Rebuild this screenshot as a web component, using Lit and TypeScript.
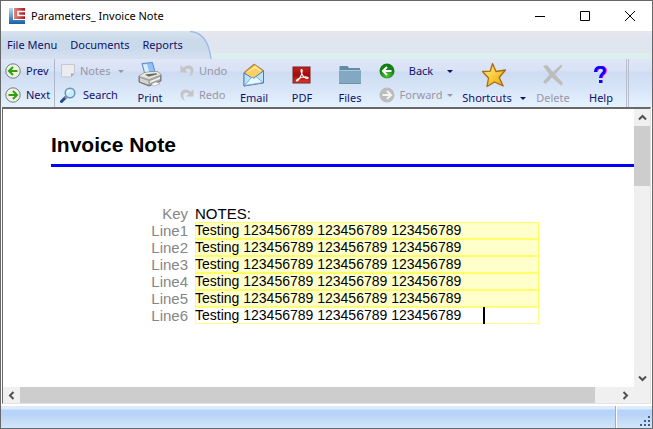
import { LitElement, html, css, svg } from "lit";
import { customElement, state } from "lit/decorators.js";

const arrowLeft = svg`<path d="M12.500 8H4.500M8 4L4 8l4 4" fill="none" stroke-width="2"/>`;
const arrowRight = svg`<path d="M3.500 8h8M8 4l4 4-4 4" fill="none" stroke-width="2"/>`;
const undoPath = "M1 1v8h8L6 6.500C8.500 4 12 5 12 8c0 2-.6 4-2 6 3-1.500 5-4 5-7 0-5.500-6.500-7.500-11-3z";

const icons = {
  prev: html`<svg width="16" height="16" viewBox="0 0 16 16"><circle cx="8" cy="8" r="7.200" fill="#eef1e2" stroke="#77807c"/><g stroke="#2fa012">${arrowLeft}</g></svg>`,
  next: html`<svg width="16" height="16" viewBox="0 0 16 16"><circle cx="8" cy="8" r="7.200" fill="#eef1e2" stroke="#77807c"/><g stroke="#2fa012">${arrowRight}</g></svg>`,
  back: html`<svg width="16" height="16" viewBox="0 0 16 16"><defs><radialGradient id="g" cy="0.8"><stop offset="0" stop-color="#55c336"/><stop offset="1" stop-color="#127f12"/></radialGradient></defs><circle cx="8" cy="8" r="7.500" fill="url(#g)"/><g stroke="#fff">${arrowLeft}</g></svg>`,
  forward: html`<svg width="16" height="16" viewBox="0 0 16 16"><circle cx="8" cy="8" r="7.500" fill="#bcbcbc"/><g stroke="#f4f4f4">${arrowRight}</g></svg>`,
  note: html`<svg width="16" height="16" viewBox="0 0 16 16"><path d="M1.500 1.500h13v9l-3.500 3.500h-9.500z" fill="#ebebf0" stroke="#c8c6cc"/><path d="M11 14v-3.500h3.500z" fill="#aaa8ae"/></svg>`,
  search: html`<svg width="16" height="16" viewBox="0 0 16 16"><path d="M1.500 14.500L6 10" stroke="#24489c" stroke-width="3" stroke-linecap="round"/><path d="M5 11l2-2" stroke="#d39a3a" stroke-width="2"/><circle cx="10" cy="6" r="4.800" fill="#c9eefb" stroke="#6d93bd" stroke-width="1.500"/><path d="M7.500 5.500a3 3 0 0 1 3-2" fill="none" stroke="#fff" stroke-width="1.300"/></svg>`,
  undo: html`<svg width="16" height="14" viewBox="0 0 16 15"><path d="${undoPath}" fill="#c5c5c8"/></svg>`,
  redo: html`<svg width="16" height="14" viewBox="0 0 16 15"><path transform="translate(16 0) scale(-1 1)" d="${undoPath}" fill="#c5c5c8"/></svg>`,
  print: html`<svg width="24" height="25" viewBox="0 0 24 25"><path d="M4 1.500L14.500.5 17.500 12 7 13z" fill="#8fc1f6" stroke="#4d79bd" stroke-width=".8"/><path d="M5 2.500l4-.5 2.500 9.500-4 .5z" fill="#d8edff"/><path d="M1 14l6-3.500 12-1 4 3v6.500l-12 5L1 20z" fill="#a3a4a2" stroke="#595a58" stroke-width=".8"/><path d="M1 14l6-3.500 12-1 4 3-12 4.500z" fill="#e6e6e1"/><path d="M7 12.500l11-1.200 1.500 1-9 2.500z" fill="#686a68"/><path d="M2 16l8.500 3v3.500L2 19.500z" fill="#d5d5d1"/><path d="M12 19l10-4v2l-10 4z" fill="#f0f0ed"/><path d="M13 22l5-2 4 1.500-6 2.500z" fill="#fff" stroke="#888" stroke-width=".5"/></svg>`,
  email: html`<svg width="22" height="24" viewBox="0 0 22 24"><path d="M1 9.500L11 1l9.500 6.500v11L1 23z" fill="#ed9c28" stroke="#98732c" stroke-width=".8"/><path d="M3.500 9L12 2.500 18.500 7.500v7l-15 2z" fill="#fff0a6"/><path d="M4 9.500L12 5l6 3.500v6L4 17z" fill="#f9cf66"/><path d="M1 10l9 5.500L20.500 8v12L1 23z" fill="#b9e5fc" stroke="#527aae"/><path d="M1.500 22.500L9 14l2 1.500 2-2 7 6z" fill="#e9f8ff" stroke="#709cc9" stroke-width=".8"/></svg>`,
  pdf: html`<svg width="20" height="20" viewBox="0 0 20 20"><defs><linearGradient id="p" x2="0" y2="1"><stop stop-color="#c92022"/><stop offset=".5" stop-color="#9f0b0c"/><stop offset="1" stop-color="#e03a2d"/></linearGradient></defs><rect x="1" y="2" width="17" height="16" fill="url(#p)" stroke="#772021"/><path d="M9.300 4.500c1.600-.5 1 3.500-.7 7-1.500 3-3.300 5-4.100 4.400-.8-1.200 3.500-3.400 7.500-3.900 3-.4 4.500.4 4 1.200-1 1-3.500-.3-5.300-2.800C9.200 8 8.500 5 9.300 4.500z" fill="none" stroke="#fff" stroke-width="1.100"/></svg>`,
  folder: html`<svg width="24" height="20" viewBox="0 0 24 20"><path d="M1.500 1h8l1.500 2h11v4h-20.500z" fill="#648ba5"/><path d="M1 5h22v13.500H1z" fill="#82a9c1"/><path d="M1.500 5.500h21" stroke="#a9c7d8"/><path d="M1 18.500h22" stroke="#6b92aa"/></svg>`,
  star: html`<svg width="26" height="26" viewBox="0 0 26 26"><defs><linearGradient id="s" x2="1" y2="1"><stop stop-color="#fff09a"/><stop offset=".5" stop-color="#f9cd3a"/><stop offset="1" stop-color="#e69d10"/></linearGradient></defs><path d="M11.500 1.500l3.500 8 9.500-1.500-6.300 7.500 4 8.500-8.700-4L6 24.500 7.500 16 1.500 9.500l7.700-.3z" fill="url(#s)" stroke="#a86a12" stroke-width="1.300" stroke-linejoin="round"/></svg>`,
  cross: html`<svg width="24" height="22" viewBox="0 0 24 22"><path d="M2 2l4-1 6 7 8-7.500L21.500 2 14 10.500l8 8.500-2 2.500-9-8L4.500 20 2 18l6.500-7.500z" fill="#bdbdbd"/></svg>`,
  help: html`<svg width="14" height="18" viewBox="0 0 14 18"><path d="M2.500 6c0-6 9-6 9-1.500C11.500 8 7.500 7.500 7.500 12" fill="none" stroke="#ff28e6" stroke-width="3"/><path d="M1.500 6c0-6 9-6 9-1.500C10.500 8 6.500 7.500 6.500 12" fill="none" stroke="#1200ff" stroke-width="3"/><path d="M5 14h3.500v3H5z" fill="#1200ff"/></svg>`,
  caret: html`<svg class="caret" width="6" height="3" viewBox="0 0 6 3"><path d="M0 0h6L3 3z" fill="currentColor"/></svg>`,
};

const chevron = (d: string) =>
  html`<svg width="9" height="9" viewBox="0 0 9 9"><path d="${d}" fill="none" stroke="#505050" stroke-width="2"/></svg>`;

@customElement("app-root")
export class AppRoot extends LitElement {
  @state() private lines = Array.from({ length: 6 }, () => "Testing 123456789 123456789 123456789");

  static styles = css`
    :host {
      display: block;
      font: 11px/16px "Noto Sans", "Open Sans", sans-serif;
      color: #10106c;
    }
    * { box-sizing: border-box; }
    svg { display: block; flex: none; }
    button {
      font: inherit;
      color: inherit;
      background: none;
      border: 0;
      padding: 0;
      margin: 0;
      white-space: nowrap;
    }
    button:disabled { color: #9996a6; }
    .window {
      min-height: 100vh;
      display: flex;
      flex-direction: column;
      border: 1px solid #66686a;
      background: #fff;
    }
    .title {
      height: 30px;
      display: flex;
      align-items: center;
      padding-left: 8px;
      gap: 6px;
      color: #000;
    }
    .title h1 { font: inherit; margin: 0; flex: 1; white-space: nowrap; }
    .controls { display: flex; align-self: stretch; }
    .controls button { width: 45px; display: grid; place-items: center; }
    .menubar {
      height: 28px;
      display: flex;
      background: linear-gradient(#e6e6f0 6px, #dfe6f0 6px 22px, #dcefee 22px);
    }
    .menu {
      display: flex;
      align-items: center;
      gap: 13px;
      padding: 0 2px 0 6px;
      background: linear-gradient(#dae3ef, #cbdaeb 8px 18px, #d6e0f1);
    }
    .toolbar {
      height: 48px;
      display: grid;
      grid-template-columns: 54px 72px 46px 58px 46px 50px 46px 85px 72px 46px 50px 3px 1fr;
      background: linear-gradient(#dfe7f7, #d8e2f5 12px, #cddcf2 13px, #d8e5f8 30px, #e5f2fe);
    }
    .pair {
      display: grid;
      grid-template-rows: 24px 24px;
    }
    .pair button { display: flex; align-items: center; gap: 5px; text-align: left; }
    .nav { padding-left: 4px; border-right: 1px solid #aeb8ca; }
    .find { padding-left: 5px; }
    .edit { padding-left: 6px; }
    .edit button, .find button { gap: 4px; }
    .find .wide { gap: 7px; }
    .find .caret { margin-left: 4px; }
    .history { padding-left: 6px; }
    .history button { gap: 2px; }
    .history span { width: 48px; text-align: center; }
    .tall {
      display: grid;
      grid-template-rows: 31px 16px;
      justify-items: center;
      align-items: center;
    }
    .label { display: flex; align-items: center; gap: 8px; }
    .end { border: solid #b7bfce; border-width: 0 1px; }
    .view {
      flex: 1;
      display: grid;
      grid-template: 1fr 16px / 1fr 16px;
      margin: 0 1px;
      border: 1px solid #e3e3e3;
      border-top: 2px solid #696969;
      border-left-color: #696969;
      background: #f0f0f0;
      font-family: "Liberation Sans", Arial, sans-serif;
      color: #000;
    }
    .page { background: #fff; padding: 23px 0 0 48px; min-width: 0; }
    .page h2 {
      margin: 0;
      font-size: 21px;
      line-height: 26px;
      padding-bottom: 6px;
      border-bottom: 3px solid #00f;
    }
    .form { margin-top: 38px; padding-left: 96px; }
    .row {
      display: grid;
      grid-template-columns: 41px minmax(0, 344px);
      column-gap: 7px;
      height: 17px;
      font-size: 15px;
      line-height: 17px;
    }
    .row label, .row .key { color: #868686; text-align: right; }
    .field { position: relative; display: flex; }
    .field input {
      width: 100%;
      height: 17px;
      border: 0;
      box-shadow: inset 0 0 0 1px #ffff66;
      padding: 0;
      margin: 0;
      border-radius: 0;
      background: #ffffcc;
      font: 14px/17px "Liberation Sans", Arial, sans-serif;
      color: #000;
      outline: 0;
    }
    .field.active input { background: #fff; box-shadow: inset 0 0 0 1px #ffff88; }
    .field.active::after {
      content: "";
      position: absolute;
      left: 288px;
      top: 0;
      width: 2px;
      height: 17px;
      background: #000;
    }
    .vbar, .hbar { display: flex; background: #f0f0f0; }
    .vbar { flex-direction: column; }
    .bar-button { width: 17px; height: 16px; display: grid; place-items: center; flex: none; }
    .vbar .bar-button { width: 16px; height: 17px; }
    .vthumb { height: 60px; background: #cdcdcd; }
    .hthumb { flex: 574; background: #cdcdcd; }
    .hspace { flex: 22; }
    .vspace { flex: 1; }
    .status {
      height: 24px;
      display: flex;
      justify-content: flex-end;
      border-top: 2px solid #fff;
      background: linear-gradient(#dcecfd 3px, #b6d3f8 4px 8px, #c5dbf7 14px, #cfe7fb);
    }
    .grip {
      width: 37px;
      border-left: 1px solid #8fb0df;
      box-shadow: inset 1px 0 #fff;
      display: flex;
      justify-content: flex-end;
      align-items: flex-end;
      padding: 0 1px 1px 0;
    }
  `;

  private tall(icon: unknown, text: string, disabled = false) {
    return html`<button class="tall" ?disabled=${disabled}>${icon}<span>${text}</span></button>`;
  }

  render() {
    return html`
      <div class="window">
        <header class="title">
          <svg width="16" height="16" viewBox="0 0 16 16">
            <defs>
              <linearGradient id="blue" x2="0" y2="1"><stop stop-color="#b9dcf0" /><stop offset="1" stop-color="#145fa8" /></linearGradient>
              <linearGradient id="red" x2="1"><stop stop-color="#e08a84" /><stop offset="1" stop-color="#b01218" /></linearGradient>
            </defs>
            <path d="M0 0h4v12h12v4H0z" fill="url(#blue)" />
            <path d="M5 0h11v11H5z" fill="url(#red)" />
            <path d="M16 3.500H9v4h7" fill="none" stroke="#fff" stroke-width="1.500" />
          </svg>
          <h1>Parameters_ Invoice Note</h1>
          <div class="controls">
            <button aria-label="Minimize"><svg width="10" height="10"><path d="M0 5.500h10" stroke="#000" /></svg></button>
            <button aria-label="Maximize"><svg width="10" height="10"><path d="M.5.5h9v9h-9z" fill="none" stroke="#000" /></svg></button>
            <button aria-label="Close"><svg width="10" height="10"><path d="M0 0l10 10M10 0L0 10" stroke="#000" /></svg></button>
          </div>
        </header>

        <nav class="menubar">
          <div class="menu">
            <button>File Menu</button><button>Documents</button><button>Reports</button>
          </div>
          <svg width="28" height="28" viewBox="0 0 28 28">
            <defs><linearGradient id="tab" gradientUnits="userSpaceOnUse" x1="0" x2="0" y1="0" y2="28"><stop stop-color="#dae3ef" /><stop offset=".29" stop-color="#cbdaeb" /><stop offset=".64" stop-color="#cbdaeb" /><stop offset="1" stop-color="#d6e0f1" /></linearGradient></defs>
            <path d="M0 0h6C17 1 24 11 26 28H0z" fill="url(#tab)" />
            <path d="M5 .5C17 1 24 11 26 28" fill="none" stroke="#9db9e2" stroke-width="1.300" />
          </svg>
        </nav>

        <div class="toolbar" role="toolbar">
          <div class="pair nav">
            <button>${icons.prev}Prev</button>
            <button>${icons.next}Next</button>
          </div>
          <div class="pair find">
            <button disabled>${icons.note}Notes ${icons.caret}</button>
            <button class="wide">${icons.search}Search</button>
          </div>
          ${this.tall(icons.print, "Print")}
          <div class="pair edit">
            <button disabled>${icons.undo}Undo</button>
            <button disabled>${icons.redo}Redo</button>
          </div>
          ${this.tall(icons.email, "Email")}
          ${this.tall(icons.pdf, "PDF")}
          ${this.tall(icons.folder, "Files")}
          <div class="pair history">
            <button>${icons.back}<span>Back</span>${icons.caret}</button>
            <button disabled>${icons.forward}<span>Forward</span>${icons.caret}</button>
          </div>
          <button class="tall">${icons.star}<span class="label">Shortcuts ${icons.caret}</span></button>
          ${this.tall(icons.cross, "Delete", true)}
          ${this.tall(icons.help, "Help")}
          <div class="end"></div>
        </div>

        <main class="view">
          <section class="page">
            <h2>Invoice Note</h2>
            <form class="form">
              <div class="row"><span class="key">Key</span><span>NOTES:</span></div>
              ${this.lines.map(
                (text, i) => html`<div class="row">
                  <label for="line${i + 1}">Line${i + 1}</label>
                  <div class="field ${i === 5 ? "active" : ""}"><input id="line${i + 1}" type="text" .value=${text} /></div>
                </div>`
              )}
            </form>
          </section>
          <div class="vbar">
            <button class="bar-button" aria-label="Scroll up">${chevron("M1 6.500L4.500 3 8 6.500")}</button>
            <div class="vthumb"></div>
            <div class="vspace"></div>
            <button class="bar-button" aria-label="Scroll down">${chevron("M1 2.500L4.500 6 8 2.500")}</button>
          </div>
          <div class="hbar">
            <button class="bar-button" aria-label="Scroll left">${chevron("M6.500 1L3 4.500 6.500 8")}</button>
            <div class="hthumb"></div>
            <div class="hspace"></div>
            <button class="bar-button" aria-label="Scroll right">${chevron("M2.500 1L6 4.500 2.500 8")}</button>
          </div>
        </main>

        <footer class="status">
          <div class="grip">
            <svg width="12" height="12" viewBox="0 0 12 12"><path d="M9 1h2v2H9zM5 5h2v2H5zM9 5h2v2H9zM1 9h2v2H1zM5 9h2v2H5zM9 9h2v2H9z" fill="#3f5f92" /></svg>
          </div>
        </footer>
      </div>
    `;
  }
}
